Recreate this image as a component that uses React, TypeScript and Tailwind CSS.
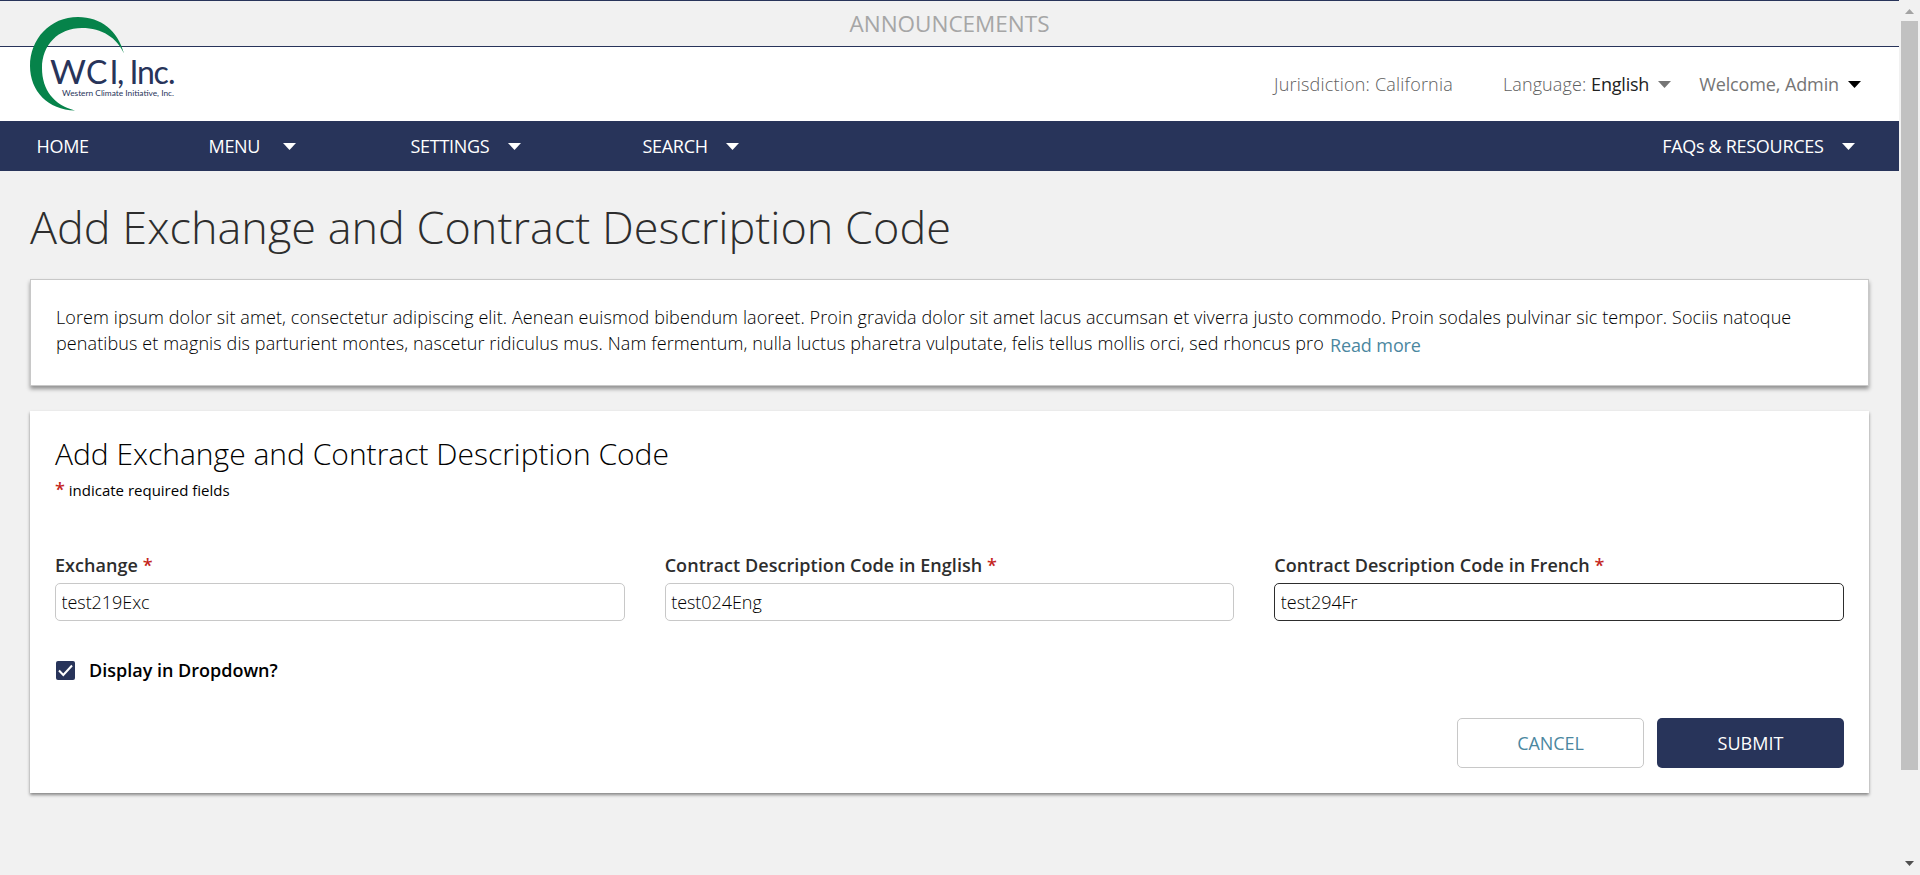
import React from "react";

function Caret({ className }: { className: string }) {
  return (
    <svg className={`shrink-0 ${className}`} width="13" height="7" viewBox="0 0 13 7" fill="currentColor">
      <path d="M0 0h13L6.5 7z" />
    </svg>
  );
}

function Logo() {
  return (
    <svg className="absolute left-[29px] top-[16px]" width="150" height="98" viewBox="29 16 150 98">
      <path
        d="M124 53.5C118 31 101 17 78 17C50 17 30 39 30 66C30 91 48 110 75 110.5C54 105 42 90 42 68C42 45 58 28 82 28C102 28 117 38 124 53.5Z"
        fill="#06834a"
      />
      <g fontFamily="Lato, sans-serif" fill="#28345a">
        <text x="50" y="83.5" fontSize="32" textLength="36" lengthAdjust="spacingAndGlyphs">W</text>
        <text x="86 109.5 117" y="83.5" fontSize="32">CI,</text>
        <text x="129.5 137 153.5 168" y="83.5" fontSize="32">Inc.</text>
        <text x="62" y="96" fontSize="8.4" textLength="112" lengthAdjust="spacingAndGlyphs">
          Western Climate Initiative, Inc.
        </text>
      </g>
    </svg>
  );
}

function Field({ label, value, focused }: { label: string; value: string; focused?: boolean }) {
  return (
    <label className="flex flex-col">
      <span className="h-[28px] text-[18px] font-semibold leading-[28px] tracking-[0.05px] text-[#2d2d2d]">
        {label} <span className="text-[#c4261d]">*</span>
      </span>
      <input
        readOnly
        value={value}
        className={`mt-[4px] h-[38px] w-full rounded-[5px] border bg-white px-[5.5px] text-[18px] font-light tracking-[-0.05px] text-black outline-none ${
          focused ? "border-[#2d2d2d]" : "border-[#c8c8c8]"
        }`}
      />
    </label>
  );
}

export default function App() {
  return (
    <div className="flex h-[875px] w-[1920px] overflow-hidden bg-[#f1f1f1] font-['Open_Sans',sans-serif]">
      <div className="relative flex w-[1899px] flex-col">
        <div className="flex h-[47px] items-center justify-center border-y border-[#28345a] text-[22.5px] text-[#a6a6a6]">
          ANNOUNCEMENTS
        </div>
        <header className="flex h-[74px] items-center justify-end bg-white pr-[38px] text-[18px] text-[#757575]">
          <span className="font-light tracking-[0.2px] text-[#606060]">Jurisdiction: California</span>
          <span className="ml-[50px] font-light tracking-[0.1px] text-[#606060]">
            Language: <span className="font-normal tracking-[-0.2px] text-[#222]">English</span>
          </span>
          <Caret className="ml-[9px] text-[#757575]" />
          <span className="ml-[28px] tracking-[-0.12px]">Welcome, Admin</span>
          <Caret className="ml-[9px] text-black" />
        </header>
        <Logo />
        <nav className="flex h-[50px] items-center bg-[#28345a] pl-[36.5px] pr-[44.5px] text-[18px] tracking-[-0.3px] text-white">
          <span className="w-[172px]">HOME</span>
          <span className="flex w-[202px] items-center">
            MENU <Caret className="ml-[23px]" />
          </span>
          <span className="flex w-[232px] items-center">
            SETTINGS <Caret className="ml-[19px]" />
          </span>
          <span className="flex items-center">
            SEARCH <Caret className="ml-[18px]" />
          </span>
          <span className="ml-auto flex items-center">
            FAQs &amp; RESOURCES <Caret className="ml-[18px]" />
          </span>
        </nav>
        <main className="flex flex-col pl-[30px] pr-[30px]">
          <h1 className="mt-[23px] h-[66px] text-[45px] font-light leading-[66px] text-[#2d2d2d]">
            Add Exchange and Contract Description Code
          </h1>
          <section className="mt-[19px] h-[107px] border border-[#c8c8c8] bg-white pl-[25px] pt-[24px] text-[18px] font-light leading-[26px] tracking-[0.09px] text-black shadow-[0_3px_4px_rgba(0,0,0,0.4)]">
            <p className="whitespace-nowrap">
              Lorem ipsum dolor sit amet, consectetur adipiscing elit. Aenean euismod bibendum laoreet. Proin gravida dolor sit amet lacus accumsan et viverra justo commodo. Proin sodales pulvinar sic tempor. Sociis natoque
            </p>
            <p className="flex whitespace-nowrap tracking-[0.11px]">
              penatibus et magnis dis parturient montes, nascetur ridiculus mus. Nam fermentum, nulla luctus pharetra vulputate, felis tellus mollis orci, sed rhoncus pro
              <a className="ml-[6px] mt-[2px] font-normal tracking-[-0.1px] text-[#4b879f]">Read more</a>
            </p>
          </section>
          <section className="mt-[25px] flex h-[382px] flex-col bg-white px-[25px] shadow-[0_2px_3px_rgba(0,0,0,0.45)]">
            <h2 className="mt-[21px] h-[44px] text-[30px] font-light leading-[44px] text-black">
              Add Exchange and Contract Description Code
            </h2>
            <p className="h-[25px] text-[15px] leading-[26px] text-black">
              <span className="text-[18px] font-semibold text-[#c4261d]">*</span> indicate required fields
            </p>
            <div className="mt-[50px] grid grid-cols-3 gap-x-[40px]">
              <Field label="Exchange" value="test219Exc" />
              <Field label="Contract Description Code in English" value="test024Eng" />
              <Field label="Contract Description Code in French" value="test294Fr" focused />
            </div>
            <div className="mt-[36px] flex h-[26px] items-center pl-px text-[18px] font-semibold text-black">
              <span className="mr-[14px] flex size-[19px] items-center justify-center rounded-[2px] bg-[#28345a]">
                <svg width="15" height="13" viewBox="0 0 15 13" fill="none" stroke="white" strokeWidth="2">
                  <path d="M1 6.5L5.3 11L14 1.5" />
                </svg>
              </span>
              Display in Dropdown?
            </div>
            <div className="mt-[35px] flex h-[50px] justify-end gap-[13px] text-[18px]">
              <button className="w-[187px] rounded-[5px] border border-[#c8c8c8] bg-white tracking-[-0.1px] text-[#4b879f]">CANCEL</button>
              <button className="w-[187px] rounded-[5px] bg-[#28345a] text-white">SUBMIT</button>
            </div>
          </section>
        </main>
      </div>
      <div className="flex w-[21px] flex-col items-center justify-between pb-[9px] pt-[9px]">
        <svg width="9" height="5" viewBox="0 0 9 5" fill="#a3a3a3">
          <path d="M4.5 0L9 5H0z" />
        </svg>
        <div className="mb-auto mt-[7px] h-[749px] w-[17px] bg-[#c1c1c1]" />
        <svg width="9" height="5" viewBox="0 0 9 5" fill="#505050">
          <path d="M0 0h9L4.5 5z" />
        </svg>
      </div>
    </div>
  );
}
